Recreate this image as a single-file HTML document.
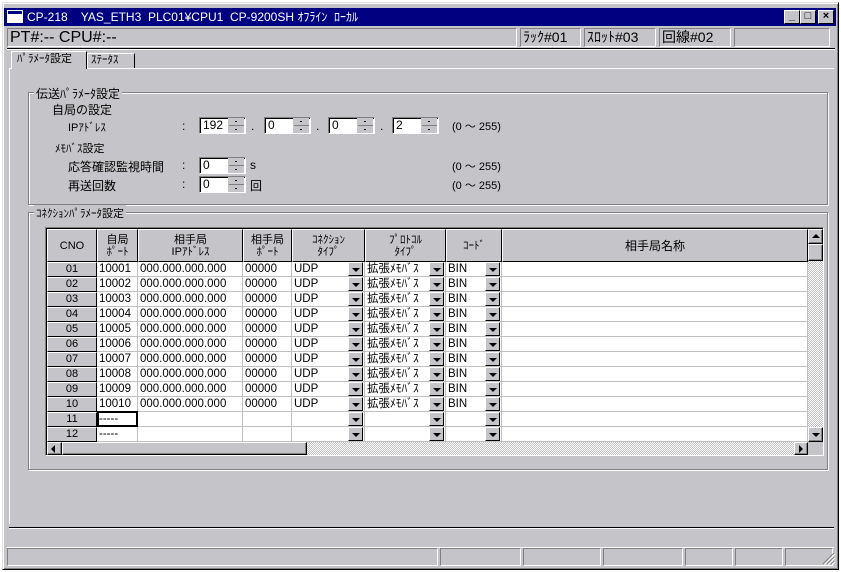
<!DOCTYPE html>
<html><head><meta charset="utf-8"><style>
*{margin:0;padding:0;box-sizing:border-box}
body{width:841px;height:572px;background:#fff;position:relative;overflow:hidden;font-family:"Liberation Sans","Noto Sans CJK JP",sans-serif;font-size:12px;color:#000}
.a{position:absolute;white-space:nowrap}
.win{left:2px;top:2px;width:837px;height:568px;background:#c5c4c8;border:1px solid;border-color:#dfdfdf #000 #000 #dfdfdf;box-shadow:inset 1px 1px #fff,inset -1px -1px #808080}
.sunk{border:1px solid;border-color:#808080 #fff #fff #808080}
.rais{border:1px solid;border-color:#fff #000 #000 #fff;box-shadow:inset -1px -1px #808080}
.grp{border:1px solid #808080;box-shadow:1px 1px #fff,inset 1px 1px #fff}
.lbl{background:#c5c4c8;padding:0 2px}
.tb{background:#fff;border:1px solid;border-color:#808080 #fff #fff #808080;box-shadow:inset 1px 1px #000;padding-left:3px;line-height:14px}
.cell{position:absolute;background:#fff;border-right:1px solid #c0c0c0;border-bottom:1px solid #c0c0c0;line-height:14px;padding-left:2px;white-space:nowrap;overflow:hidden;font-size:11.5px}
.hd{position:absolute;background:#c5c4c8;border:1px solid;border-color:#fff #000 #000 #fff;text-align:center;font-size:11px;line-height:12px;display:flex;align-items:center;justify-content:center;white-space:nowrap}
.rh{position:absolute;background:#c5c4c8;border:1px solid;border-color:#fff #000 #000 #fff;text-align:center;font-size:11px;line-height:12px}
.dd{position:absolute;width:15px;height:14px;background:#c5c4c8;border:1px solid;border-color:#fff #000 #000 #fff}
.dd:after{content:"";position:absolute;left:3px;top:5px;border-left:4px solid transparent;border-right:4px solid transparent;border-top:4px solid #000}
.tbtn{position:absolute;top:10px;width:16px;height:14px;background:#c5c4c8;border:1px solid;border-color:#fff #000 #000 #fff;font-size:11px;line-height:11px;text-align:center;font-weight:bold}
.st{font-size:14px;line-height:17px;padding-left:2px;overflow:hidden}
</style></head><body>
<div class="a win"></div>
<div class="a" style="left:4px;top:8px;width:832px;height:18px;background:#000080"></div>
<div class="a" style="left:8px;top:11px;width:14px;height:11px;background:#fff;border-top:3px solid #000080;outline:1px solid #fff"></div>
<div class="a" style="left:27px;top:10px;color:#fff;font-size:12px;line-height:14px;white-space:pre">CP-218    YAS_ETH3  PLC01¥CPU1  CP-9200SH ｵﾌﾗｲﾝ  ﾛｰｶﾙ</div>
<div class="tbtn" style="left:784px">_</div>
<div class="tbtn" style="left:800px">□</div>
<div class="tbtn" style="left:818px">×</div>

<div class="a sunk" style="left:7px;top:28px;width:510px;height:19px"></div>
<div class="a" style="left:10px;top:29px;font-size:16px;line-height:18px">PT#:-- CPU#:--</div>
<div class="a sunk st" style="left:520px;top:28px;width:61px;height:19px">ﾗｯｸ#01</div>
<div class="a sunk st" style="left:584px;top:28px;width:72px;height:19px">ｽﾛｯﾄ#03</div>
<div class="a sunk st" style="left:659px;top:28px;width:72px;height:19px">回線#02</div>
<div class="a sunk" style="left:734px;top:28px;width:96px;height:19px"></div>
<div class="a" style="left:7px;top:48px;width:828px;height:2px;border-top:1px solid #000;border-bottom:1px solid #fff"></div>

<div class="a" style="left:9px;top:68px;width:825px;height:456px;border-top:1px solid #fff;border-left:1px solid #fff"></div>
<div class="a" style="left:11px;top:51px;width:76px;height:18px;background:#c5c4c8;border:1px solid;border-color:#fff #000 transparent #fff;border-bottom:none;font-size:11px;line-height:15px;padding-left:5px">ﾊﾟﾗﾒｰﾀ設定</div>
<div class="a" style="left:87px;top:53px;width:48px;height:15px;border:1px solid;border-color:#fff #000 transparent #fff;border-bottom:none;font-size:11px;line-height:13px;padding-left:3px">ｽﾃｰﾀｽ</div>

<div class="a grp" style="left:28px;top:92px;width:800px;height:113px"></div>
<div class="a lbl" style="left:34px;top:85px">伝送ﾊﾟﾗﾒｰﾀ設定</div>
<div class="a" style="left:52px;top:101px">自局の設定</div>
<div class="a" style="left:68px;top:119px;font-size:11px">IPｱﾄﾞﾚｽ</div>
<div class="a" style="left:182px;top:119px">:</div>
<div class="a" style="left:55px;top:140px;font-size:11px">ﾒﾓﾊﾞｽ設定</div>
<div class="a" style="left:68px;top:158px">応答確認監視時間</div>
<div class="a" style="left:182px;top:158px">:</div>
<div class="a" style="left:68px;top:177px">再送回数</div>
<div class="a" style="left:182px;top:177px">:</div>

<div class="a tb" style="left:199px;top:117px;width:47px;height:17px">192</div>
<div class="a tb" style="left:264px;top:117px;width:47px;height:17px">0</div>
<div class="a tb" style="left:328px;top:117px;width:47px;height:17px">0</div>
<div class="a tb" style="left:392px;top:117px;width:47px;height:17px">2</div>
<div class="a tb" style="left:199px;top:157px;width:47px;height:17px">0</div>
<div class="a tb" style="left:199px;top:176px;width:47px;height:17px">0</div>
<div class="a" style="left:251px;top:119px">.</div>
<div class="a" style="left:316px;top:119px">.</div>
<div class="a" style="left:380px;top:119px">.</div>
<div class="a" style="left:250px;top:158px">s</div>
<div class="a" style="left:250px;top:177px">回</div>
<div class="a" style="left:452px;top:118px;font-size:11px">(0 ～ 255)</div>
<div class="a" style="left:452px;top:158px;font-size:11px">(0 ～ 255)</div>
<div class="a" style="left:452px;top:177px;font-size:11px">(0 ～ 255)</div>
<svg class="a" style="left:0;top:0" width="841" height="200">
<g fill="#c5c4c8">
<rect x="228" y="118" width="16" height="15"/><rect x="293" y="118" width="16" height="15"/><rect x="357" y="118" width="16" height="15"/><rect x="421" y="118" width="16" height="15"/><rect x="228" y="158" width="16" height="15"/><rect x="228" y="177" width="16" height="15"/>
</g>
<g stroke="#808080" fill="none">
<path d="M229 125.5h15M294 125.5h15M358 125.5h15M422 125.5h15M229 165.5h15M229 184.5h15"/>
</g>
<g fill="#000"><rect x="235" y="121" width="2" height="1"/><rect x="235" y="129" width="2" height="1"/><rect x="300" y="121" width="2" height="1"/><rect x="300" y="129" width="2" height="1"/><rect x="364" y="121" width="2" height="1"/><rect x="364" y="129" width="2" height="1"/><rect x="428" y="121" width="2" height="1"/><rect x="428" y="129" width="2" height="1"/><rect x="235" y="161" width="2" height="1"/><rect x="235" y="169" width="2" height="1"/><rect x="235" y="180" width="2" height="1"/><rect x="235" y="188" width="2" height="1"/></g>
</svg>

<div class="a grp" style="left:28px;top:212px;width:800px;height:258px"></div>
<div class="a lbl" style="left:34px;top:205px;font-size:11px">ｺﾈｸｼｮﾝﾊﾟﾗﾒｰﾀ設定</div>
<div class="a" style="left:45px;top:227px;width:779px;height:229px;background:#c5c4c8;border:1px solid;border-color:#808080 #fff #fff #808080;box-shadow:inset 1px 1px #000"></div>
<div class="a" style="left:47px;top:229px;width:761px;height:213px;background:#fff"></div>
<div class="hd" style="left:47px;top:229px;width:50px;height:33px">CNO</div>
<div class="hd" style="left:97px;top:229px;width:41px;height:33px">自局<br>ﾎﾟｰﾄ</div>
<div class="hd" style="left:138px;top:229px;width:105px;height:33px">相手局<br>IPｱﾄﾞﾚｽ</div>
<div class="hd" style="left:243px;top:229px;width:49px;height:33px">相手局<br>ﾎﾟｰﾄ</div>
<div class="hd" style="left:292px;top:229px;width:73px;height:33px">ｺﾈｸｼｮﾝ<br>ﾀｲﾌﾟ</div>
<div class="hd" style="left:365px;top:229px;width:81px;height:33px">ﾌﾟﾛﾄｺﾙ<br>ﾀｲﾌﾟ</div>
<div class="hd" style="left:446px;top:229px;width:56px;height:33px">ｺｰﾄﾞ</div>
<div class="hd" style="left:502px;top:229px;width:306px;height:33px;font-size:12px">相手局名称</div>
<div id="rows"></div>
<div class="a" style="left:808px;top:229px;width:15px;height:213px;background:repeating-conic-gradient(#fff 0 25%,#c0c0c0 0 50%) 0 0/2px 2px"></div>
<div class="a rais" style="left:808px;top:229px;width:15px;height:15px;background:#c5c4c8"></div>
<div class="a" style="left:812px;top:234px;border-left:4px solid transparent;border-right:4px solid transparent;border-bottom:4px solid #000"></div>
<div class="a rais" style="left:808px;top:244px;width:15px;height:17px;background:#c5c4c8"></div>
<div class="a rais" style="left:808px;top:427px;width:15px;height:15px;background:#c5c4c8"></div>
<div class="a" style="left:812px;top:433px;border-left:4px solid transparent;border-right:4px solid transparent;border-top:4px solid #000"></div>
<div class="a" style="left:47px;top:442px;width:761px;height:13px;background:repeating-conic-gradient(#fff 0 25%,#c0c0c0 0 50%) 0 0/2px 2px"></div>
<div class="a rais" style="left:47px;top:442px;width:15px;height:13px;background:#c5c4c8"></div>
<div class="a" style="left:51px;top:445px;border-top:4px solid transparent;border-bottom:4px solid transparent;border-right:4px solid #000"></div>
<div class="a rais" style="left:62px;top:442px;width:245px;height:13px;background:#c5c4c8"></div>
<div class="a rais" style="left:794px;top:442px;width:14px;height:13px;background:#c5c4c8"></div>
<div class="a" style="left:799px;top:445px;border-top:4px solid transparent;border-bottom:4px solid transparent;border-left:4px solid #000"></div>

<div class="a" style="left:9px;top:527px;width:825px;height:2px;border-top:1px solid #000;border-bottom:1px solid #fff"></div>
<div class="a" style="left:7px;top:547px;width:827px;height:1px;background:#fff"></div>
<div class="a sunk" style="left:7px;top:548px;width:431px;height:18px"></div>
<div class="a sunk" style="left:440px;top:548px;width:81px;height:18px"></div>
<div class="a sunk" style="left:523px;top:548px;width:78px;height:18px"></div>
<div class="a sunk" style="left:603px;top:548px;width:80px;height:18px"></div>
<div class="a sunk" style="left:685px;top:548px;width:48px;height:18px"></div>
<div class="a sunk" style="left:735px;top:548px;width:48px;height:18px"></div>
<div class="a sunk" style="left:785px;top:548px;width:48px;height:18px"></div>
<svg class="a" style="left:822px;top:552px" width="14" height="14"><path d="M12 1L1 12M12 5L5 12M12 9L9 12" stroke="#808080"/><path d="M13 2L2 13M13 6L6 13M13 10L10 13" stroke="#fff"/></svg>
<script>
var h='';
for(var i=0;i<12;i++){
 var y=262+i*15,n=('0'+(i+1)).slice(-2),f=i<10;
 var port=i<9?'1000'+(i+1):'10010';
 h+='<div class="rh" style="left:47px;top:'+y+'px;width:50px;height:15px">'+n+'</div>';
 h+='<div class="cell" style="left:97px;top:'+y+'px;width:41px;height:15px">'+(f?port:'-----')+'</div>';
 h+='<div class="cell" style="left:138px;top:'+y+'px;width:105px;height:15px">'+(f?'000.000.000.000':'')+'</div>';
 h+='<div class="cell" style="left:243px;top:'+y+'px;width:49px;height:15px">'+(f?'00000':'')+'</div>';
 h+='<div class="cell" style="left:292px;top:'+y+'px;width:73px;height:15px">'+(f?'UDP':'')+'</div>';
 h+='<div class="cell" style="left:365px;top:'+y+'px;width:81px;height:15px">'+(f?'拡張ﾒﾓﾊﾞｽ':'')+'</div>';
 h+='<div class="cell" style="left:446px;top:'+y+'px;width:56px;height:15px">'+(f?'BIN':'')+'</div>';
 h+='<div class="cell" style="left:502px;top:'+y+'px;width:306px;height:15px"></div>';
 h+='<div class="dd" style="left:348px;top:'+y+'px"></div><div class="dd" style="left:429px;top:'+y+'px"></div><div class="dd" style="left:485px;top:'+y+'px"></div>';
}
h+='<div class="a" style="left:97px;top:411px;width:41px;height:16px;border:2px solid #000"></div>';
document.getElementById('rows').innerHTML=h;
</script>
</body></html>
